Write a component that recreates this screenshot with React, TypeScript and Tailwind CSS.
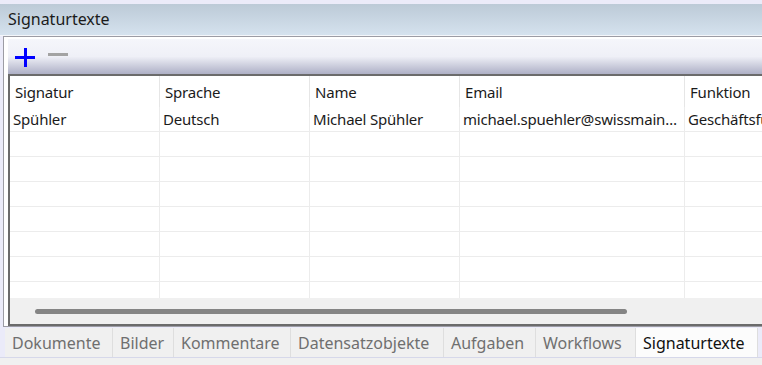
import React from "react";

const columns = [
  { key: "signatur", label: "Signatur", width: "w-[150px]" },
  { key: "sprache", label: "Sprache", width: "w-[150px]" },
  { key: "name", label: "Name", width: "w-[150px]" },
  { key: "email", label: "Email", width: "w-[225px]" },
  { key: "funktion", label: "Funktion", width: "w-[120px]" },
];

const rows = [
  {
    signatur: "Spühler",
    sprache: "Deutsch",
    name: "Michael Spühler",
    email: "michael.spuehler@swissmainsolutions.ch",
    funktion: "Geschäftsführer",
  },
];

const tabs = [
  { label: "Dokumente", width: "w-[108px]" },
  { label: "Bilder", width: "w-[61px]" },
  { label: "Kommentare", width: "w-[117px]" },
  { label: "Datensatzobjekte", width: "w-[153px]" },
  { label: "Aufgaben", width: "w-[92px]" },
  { label: "Workflows", width: "w-[100px]" },
  { label: "Signaturtexte", width: "w-[122px]", active: true },
];

function PlusIcon() {
  return (
    <svg width="20" height="20" viewBox="0 0 20 20">
      <rect x="0" y="8" width="20" height="3" fill="#0000ff" />
      <rect x="9" y="0" width="3" height="19" fill="#0000ff" />
    </svg>
  );
}

function MinusIcon() {
  return (
    <svg width="20" height="20" viewBox="0 0 20 20">
      <rect x="0" y="5" width="20" height="3" fill="#a3a3a3" />
    </svg>
  );
}

export default function App() {
  const emptyRows = Array.from({ length: 7 });

  return (
    <div
      className="w-[762px] h-[365px] overflow-hidden bg-[#ebebf9] flex flex-col"
      style={{ fontFamily: '"Noto Sans", "Open Sans", sans-serif' }}
    >
      {/* title bar */}
      <div className="mt-[4px] h-[32px] shrink-0 bg-gradient-to-b from-[#bccad7] to-[#d5e2ee] border-b border-[#f4f6fa] flex items-center px-[8px]">
        <span className="text-[16px] text-[#1b1b1b] leading-none pb-[1px]">Signaturtexte</span>
      </div>

      {/* frame */}
      <div className="ml-[3px] h-[291px] shrink-0 border-t border-l border-b border-[#9c9ca4] bg-white pl-[4px] pt-[2px] flex flex-col">
        {/* toolbar */}
        <div className="h-[35px] shrink-0 bg-gradient-to-b from-[#f5f6fb] via-[#eff0f7] to-[#aeb0c6] flex items-center gap-[13px] pl-[7px] pt-[2px]">
          <PlusIcon />
          <MinusIcon />
        </div>

        {/* table */}
        <div className="flex-1 border-t-2 border-l-2 border-b-2 border-[#6b6b6b] flex flex-col overflow-hidden">
          <div className="flex-1 overflow-hidden bg-white">
            {/* header */}
            <div className="flex h-[31px]">
              {columns.map((c) => (
                <div
                  key={c.key}
                  className={`${c.width} shrink-0 border-r border-[#e6e6e6] pl-[5px] flex items-center text-[15px] tracking-[-0.2px] text-[#1b1b1b] whitespace-nowrap overflow-hidden pt-[2px]`}
                >
                  {c.label}
                </div>
              ))}
            </div>
            {rows.map((r, i) => (
              <div key={i} className="flex h-[25px] border-b border-[#ececec]">
                {columns.map((c) => (
                  <div
                    key={c.key}
                    className={`${c.width} shrink-0 border-r border-[#ececec] pl-[3px] pr-[1px] flex items-center text-[15px] tracking-[-0.2px] text-[#1b1b1b] whitespace-nowrap overflow-hidden`}
                  >
                    {c.key === "email" ? (
                      <span className="truncate">{r.email}</span>
                    ) : (
                      (r as Record<string, string>)[c.key]
                    )}
                  </div>
                ))}
              </div>
            ))}
            {emptyRows.map((_, i) => (
              <div key={i} className="flex h-[25px] border-b border-[#ececec]">
                {columns.map((c) => (
                  <div key={c.key} className={`${c.width} shrink-0 border-r border-[#ececec]`} />
                ))}
              </div>
            ))}
          </div>
          {/* horizontal scrollbar */}
          <div className="h-[26px] shrink-0 bg-[#f0f0f0] flex items-center pl-[25px] pt-[1px]">
            <div className="w-[592px] h-[5px] rounded-full bg-[#858585]" />
          </div>
        </div>
      </div>

      {/* tabs */}
      <div className="mt-[1px] flex pl-[5px] h-[30px] shrink-0 border-b border-[#d6d8ea]">
        {tabs.map((t) => (
          <div
            key={t.label}
            className={`${t.width} shrink-0 h-full flex items-center pl-[7px] text-[16px] border-r border-[#dedede] ${
              t.active ? "bg-[#fcfcfc] text-[#111111]" : "bg-[#f0f0f0] text-[#6f6f6f]"
            }`}
          >
            {t.label}
          </div>
        ))}
      </div>
      <div className="flex-1 bg-[#f0f0f0]" />
    </div>
  );
}
